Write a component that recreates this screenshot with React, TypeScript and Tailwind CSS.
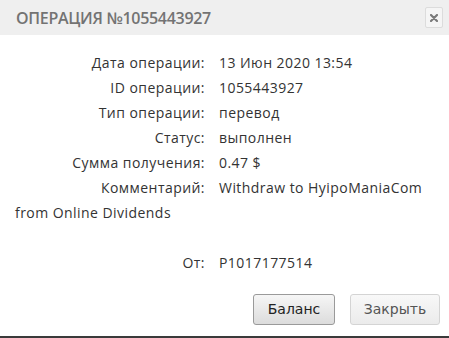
import React from "react";

const rows: [string, string][] = [
  ["Дата операции:", "13 Июн 2020 13:54"],
  ["ID операции:", "1055443927"],
  ["Тип операции:", "перевод"],
  ["Статус:", "выполнен"],
  ["Сумма получения:", "0.47 $"],
];

export default function App() {
  return (
    <div className="w-[449px] h-[338px] bg-white flex flex-col border-b-2 border-[#3a3a3a] overflow-hidden" style={{ fontFamily: '"Open Sans", sans-serif' }}>
      <div className="h-[35px] bg-[#efefef] flex items-center justify-between pl-[16px] pr-[6px] shrink-0">
        <div className="text-[16px] font-semibold tracking-[-0.3px] text-[#737373]">
          ОПЕРАЦИЯ №1055443927
        </div>
        <button className="w-[18px] h-[21px] border border-[#dcdcdc] bg-[#f5f5f5] rounded-[2px] flex items-center justify-center">
          <svg width="8" height="8" viewBox="0 0 8 8">
            <path d="M1 1 L7 7 M7 1 L1 7" stroke="#7a7a7a" strokeWidth="2.2" strokeLinecap="round" />
          </svg>
        </button>
      </div>
      <div className="px-[15px] pt-[15px] text-[14px] tracking-[0.45px] text-[#333] leading-[25px]">
        {rows.map(([l, v]) => (
          <div key={l} className="flex">
            <div className="w-[190px] text-right">{l}</div>
            <div className="pl-[14px]">{v}</div>
          </div>
        ))}
        <div>
          <span className="inline-block w-[190px] text-right">Комментарий:</span>
          <span className="pl-[14px]">Withdraw to HyipoManiaCom</span>
          <br />
          from Online Dividends
        </div>
        <div className="flex mt-[25px]">
          <div className="w-[190px] text-right">От:</div>
          <div className="pl-[14px]">P1017177514</div>
        </div>
      </div>
      <div className="flex justify-end gap-[15px] pr-[9px] mt-[19px]" style={{ fontFamily: '"DejaVu Sans", sans-serif' }}>
        <button className="w-[82px] h-[31px] border border-[#9a9a9a] rounded-[3px] bg-gradient-to-b from-[#f6f6f6] to-[#dcdcdc] text-[14px] text-[#222]">
          Баланс
        </button>
        <button className="w-[90px] h-[31px] border border-[#d4d4d4] rounded-[3px] bg-gradient-to-b from-[#f8f8f8] to-[#ebebeb] text-[14px] text-[#555]">
          Закрыть
        </button>
      </div>
    </div>
  );
}
